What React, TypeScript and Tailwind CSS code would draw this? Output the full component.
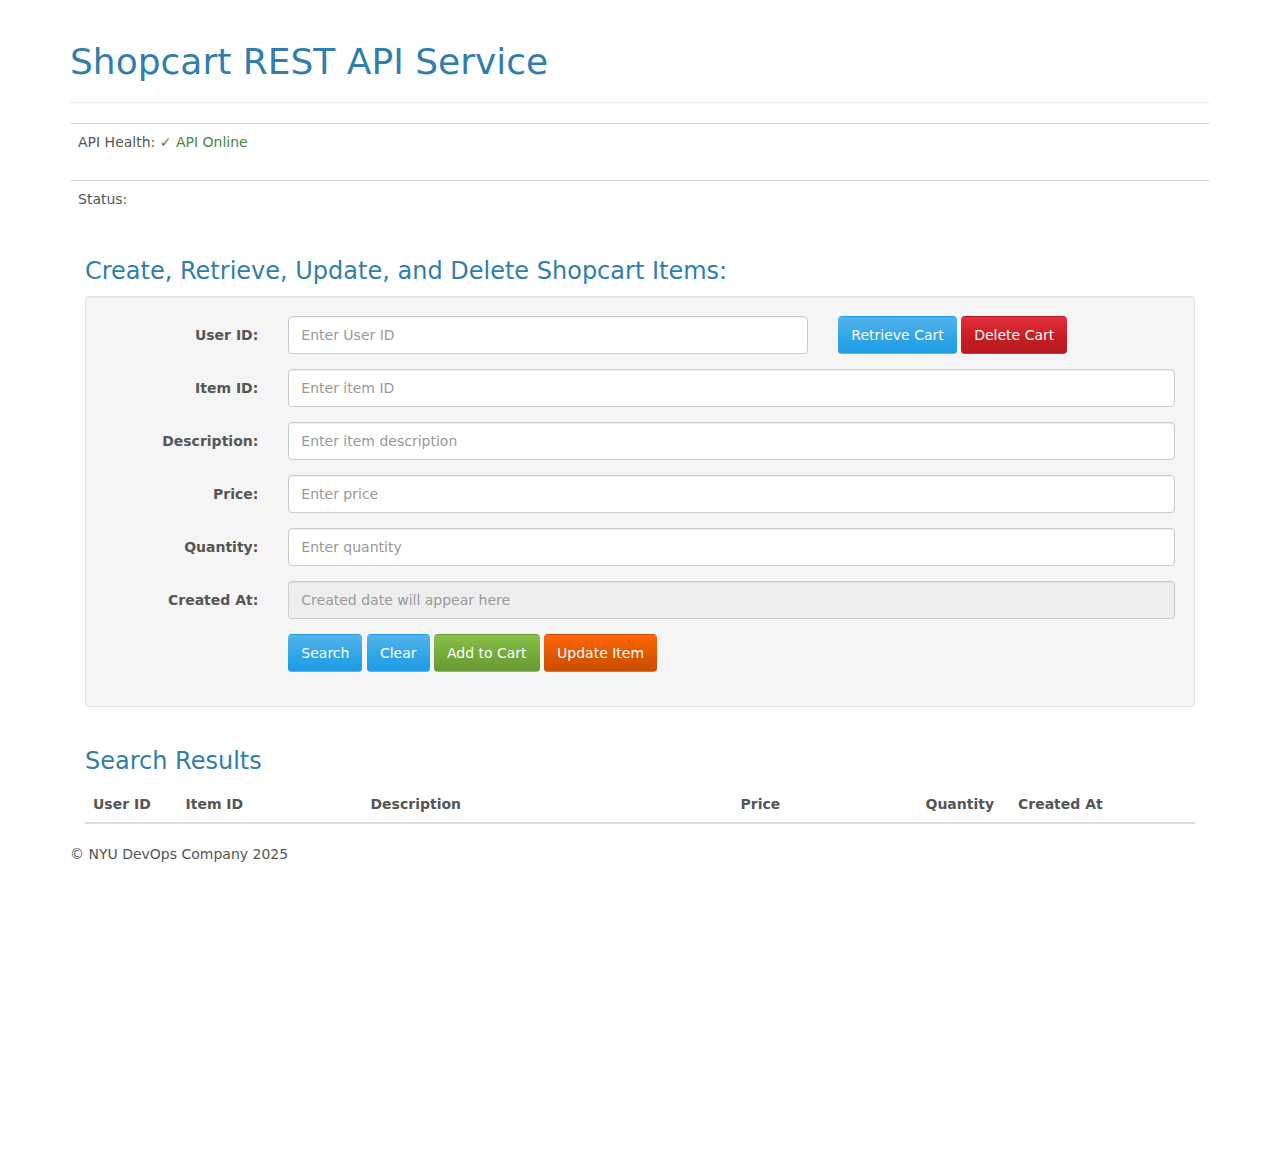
import React from "react";

const font = { fontFamily: '"DejaVu Sans", sans-serif' };

function Btn({ children, kind }: { children: React.ReactNode; kind: "primary" | "danger" | "success" | "warning" }) {
  const cls = {
    primary: "bg-[linear-gradient(#54b4eb,#2fa4e7_60%,#1d9ce5)] border-[#178acc]",
    danger: "bg-[linear-gradient(#e2303a,#c71c22_60%,#b5191f)] border-[#a0161b]",
    success: "bg-[linear-gradient(#88c149,#73a839_60%,#699934)] border-[#5e8a2f]",
    warning: "bg-[linear-gradient(#ff6707,#dd5600_60%,#c94e00)] border-[#b34500]",
  }[kind];
  return (
    <button
      type="button"
      className={`h-[38px] px-[12px] rounded-[4px] border border-transparent border-b text-white text-[14px] leading-[20px] whitespace-nowrap ${cls}`}
    >
      {children}
    </button>
  );
}

function Field({ label, placeholder, disabled }: { label: string; placeholder: string; disabled?: boolean }) {
  return (
    <div className="flex items-center mb-[15px]">
      <label className="w-[183.33px] pr-[15px] pl-[15px] text-right font-bold text-[14px] text-[#555]">{label}</label>
      <div className="flex-1 px-[15px]">
        <input
          disabled={disabled}
          placeholder={placeholder}
          className={`w-full h-[38px] px-[12px] border border-[#ccc] rounded-[4px] text-[14px] text-[#555] placeholder:text-[#999] outline-none shadow-[inset_0_1px_1px_rgba(0,0,0,0.075)] ${disabled ? "bg-[#eeeeee]" : "bg-white"}`}
          style={font}
        />
      </div>
    </div>
  );
}

export default function App() {
  return (
    <div className="bg-white min-h-[1161px] text-[14px] leading-[20px] text-[#555]" style={font}>
      <div className="w-[1170px] mx-auto px-[15px]">
        <div className="mt-[42px] pb-[10px] mb-[20px] border-b border-[#eee]">
          <h1 className="text-[36px] leading-[1.1] text-[#317eac] mb-[10px]">Shopcart REST API Service</h1>
        </div>

        <div className="border-t border-[#ddd] px-[8px] pt-[8px] pb-[28px]">
          API Health: <span className="text-[#468847]">✓ API Online</span>
        </div>
        <div className="border-t border-[#ddd] px-[8px] pt-[8px] pb-[8px]">Status:</div>

        <div className="px-[15px]">
          <h3 className="mt-[41px] mb-[12px] text-[24px] leading-[1.1] text-[#317eac]">
            Create, Retrieve, Update, and Delete Shopcart Items:
          </h3>
          <div className="bg-[#f5f5f5] border border-[#e3e3e3] rounded-[4px] p-[19px] shadow-[inset_0_1px_1px_rgba(0,0,0,0.05)]">
            <div className="-mx-[15px]">
              <div className="flex items-center mb-[15px]">
                <label className="w-[183.33px] px-[15px] text-right font-bold">User ID:</label>
                <div className="w-[550px] px-[15px]">
                  <input
                    placeholder="Enter User ID"
                    className="w-full h-[38px] px-[12px] border border-[#ccc] rounded-[4px] bg-white text-[14px] placeholder:text-[#999] outline-none shadow-[inset_0_1px_1px_rgba(0,0,0,0.075)]"
                    style={font}
                  />
                </div>
                <div className="flex-1 px-[15px] flex gap-[4.45px]">
                  <Btn kind="primary">Retrieve Cart</Btn>
                  <Btn kind="danger">Delete Cart</Btn>
                </div>
              </div>
              <Field label="Item ID:" placeholder="Enter item ID" />
              <Field label="Description:" placeholder="Enter item description" />
              <Field label="Price:" placeholder="Enter price" />
              <Field label="Quantity:" placeholder="Enter quantity" />
              <Field label="Created At:" placeholder="Created date will appear here" disabled />
              <div className="flex mb-[15px]">
                <div className="w-[183.33px]" />
                <div className="flex-1 px-[15px] flex gap-[4.45px]">
                  <Btn kind="primary">Search</Btn>
                  <Btn kind="primary">Clear</Btn>
                  <Btn kind="success">Add to Cart</Btn>
                  <Btn kind="warning">Update Item</Btn>
                </div>
              </div>
            </div>
          </div>

          <h3 className="mt-[41px] mb-[12px] text-[24px] leading-[1.1] text-[#317eac]">Search Results</h3>
          <table className="w-full table-fixed border-collapse mb-[20px]">
            <thead>
              <tr className="border-b-2 border-[#ddd]">
                <th className="w-[8.333%] p-[8px] text-left font-bold">User ID</th>
                <th className="w-[16.667%] p-[8px] text-left font-bold">Item ID</th>
                <th className="w-[33.333%] p-[8px] text-left font-bold">Description</th>
                <th className="w-[16.667%] p-[8px] text-left font-bold">Price</th>
                <th className="w-[8.333%] p-[8px] text-left font-bold">Quantity</th>
                <th className="w-[16.667%] p-[8px] text-left font-bold">Created At</th>
              </tr>
            </thead>
            <tbody></tbody>
          </table>
        </div>

        <footer>
          <p>© NYU DevOps Company 2025</p>
        </footer>
      </div>
    </div>
  );
}
